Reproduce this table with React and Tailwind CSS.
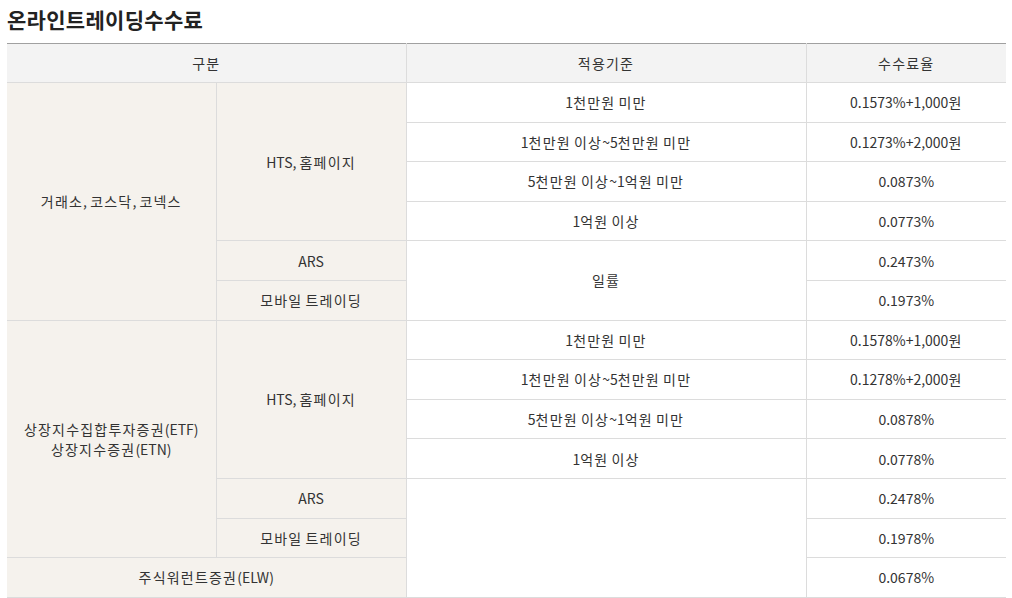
const font = { fontFamily: '"Noto Sans CJK KR", "Noto Sans", sans-serif' };

const bg = 'bg-[#f5f2ed]';
const cell = 'h-[39.6px] p-0 text-center align-middle border-b border-r border-[#dcdcdc]';
const last = 'h-[39.6px] p-0 text-center align-middle border-b border-[#dcdcdc]';

// hangul runs get a little extra spacing so widths match the original
function T({ children }) {
    const parts = String(children).split(/([가-힣]+)/);
    return parts.map((p, i) =>
        /[가-힣]/.test(p) ? (
            <span key={i} className="tracking-[1.2px]">{p}</span>
        ) : (
            <span key={i}>{p}</span>
        )
    );
}

const groups = [
    {
        name: ['거래소, 코스닥, 코넥스'],
        rates: [
            ['1천만원 미만', '0.1573%+1,000원'],
            ['1천만원 이상~5천만원 미만', '0.1273%+2,000원'],
            ['5천만원 이상~1억원 미만', '0.0873%'],
            ['1억원 이상', '0.0773%'],
        ],
        ars: '0.2473%',
        mobile: '0.1973%',
        flat: '일률',
    },
    {
        name: ['상장지수집합투자증권(ETF)', '상장지수증권(ETN)'],
        rates: [
            ['1천만원 미만', '0.1578%+1,000원'],
            ['1천만원 이상~5천만원 미만', '0.1278%+2,000원'],
            ['5천만원 이상~1억원 미만', '0.0878%'],
            ['1억원 이상', '0.0778%'],
        ],
        ars: '0.2478%',
        mobile: '0.1978%',
        flat: '',
    },
];

export default function App() {
    return (
        <div className="bg-white min-h-[598px] px-[7px] text-[#333]" style={font}>
            <h2 className="pt-[4px] h-[43px] leading-[30px] text-[21px] font-bold tracking-[0.3px] text-[#222]">온라인트레이딩수수료</h2>

            <table className="w-[999px] table-fixed border-collapse text-[14px] leading-[20px]">
                <colgroup>
                    <col className="w-[209px]" />
                    <col className="w-[190px]" />
                    <col className="w-[400px]" />
                    <col className="w-[200px]" />
                </colgroup>
                <thead>
                    <tr className="bg-[#f3f3f3] border-t border-[#a0a0a0]">
                        <th colSpan="2" className={`${cell} h-[39px] font-normal`}><T>구분</T></th>
                        <th className={`${cell} h-[39px] font-normal`}><T>적용기준</T></th>
                        <th className={`${last} h-[39px] font-normal`}><T>수수료율</T></th>
                    </tr>
                </thead>
                <tbody>
                    {groups.map((g, gi) => (
                        <>
                            {g.rates.map((r, i) => (
                                <tr key={`${gi}-${i}`}>
                                    {i === 0 && (
                                        <td rowSpan="6" className={`${cell} ${bg}`}>
                                            {g.name.map((n) => (
                                                <div key={n}><T>{n}</T></div>
                                            ))}
                                        </td>
                                    )}
                                    {i === 0 && (
                                        <td rowSpan="4" className={`${cell} ${bg}`}><T>HTS, 홈페이지</T></td>
                                    )}
                                    <td className={cell}><T>{r[0]}</T></td>
                                    <td className={last}><T>{r[1]}</T></td>
                                </tr>
                            ))}
                            <tr key={`${gi}-ars`}>
                                <td className={`${cell} ${bg}`}>ARS</td>
                                <td rowSpan={gi === 0 ? 2 : 3} className={cell}><T>{g.flat}</T></td>
                                <td className={last}>{g.ars}</td>
                            </tr>
                            <tr key={`${gi}-mobile`}>
                                <td className={`${cell} ${bg}`}><T>모바일 트레이딩</T></td>
                                <td className={last}>{g.mobile}</td>
                            </tr>
                        </>
                    ))}
                    <tr>
                        <td colSpan="2" className={`${cell} ${bg}`}><T>주식워런트증권(ELW)</T></td>
                        <td className={last}>0.0678%</td>
                    </tr>
                </tbody>
            </table>
        </div>
    );
}
